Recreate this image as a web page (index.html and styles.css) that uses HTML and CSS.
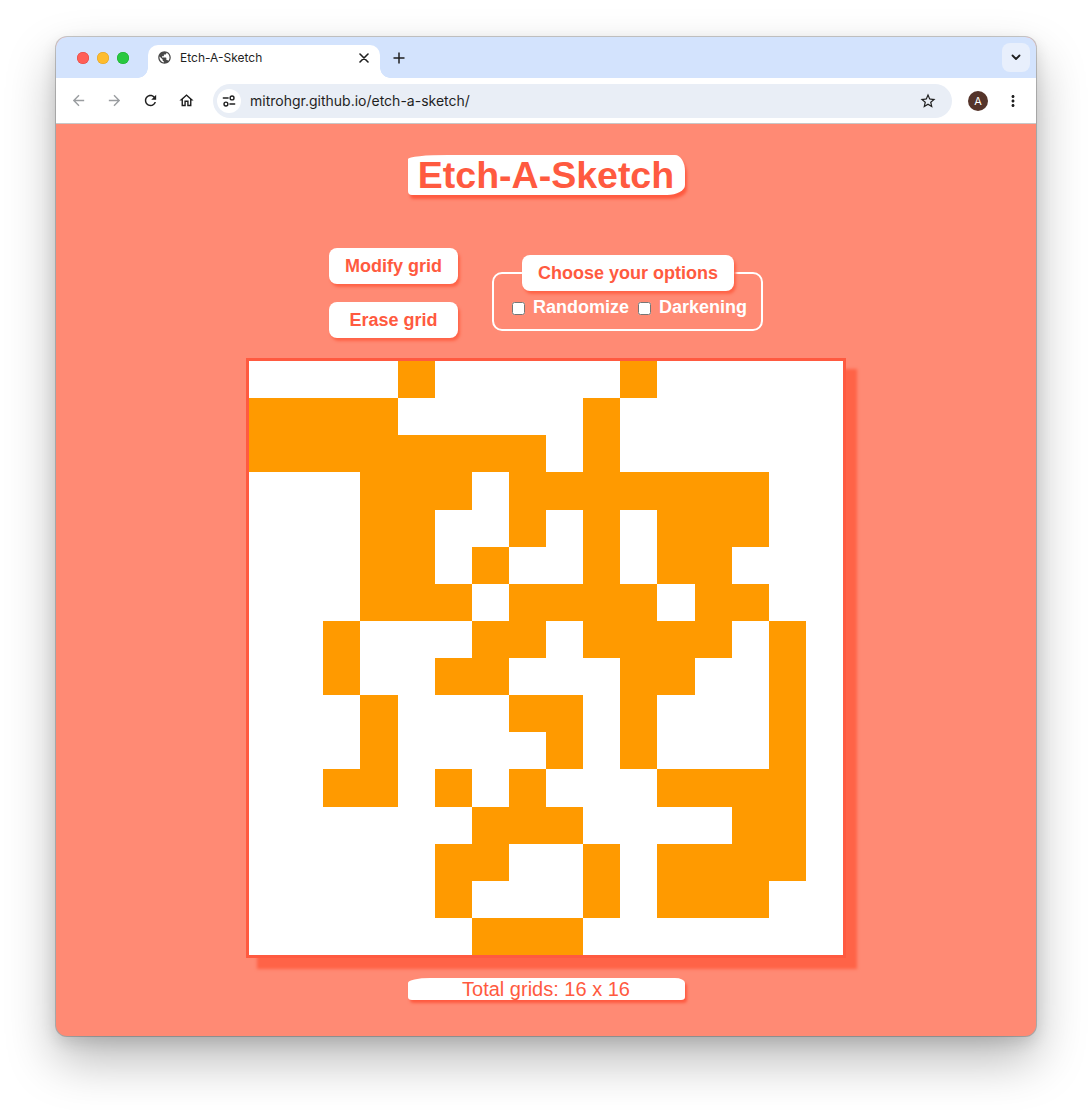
FILE: index.html
```html
<!DOCTYPE html>
<html lang="en">
<head>
<meta charset="utf-8">
<title>Etch-A-Sketch</title>
<link rel="stylesheet" href="styles.css">
</head>
<body>
<div class="window">
  <div class="tabstrip">
    <div class="lights"><span class="light red"></span><span class="light yellow"></span><span class="light green"></span></div>
    <div class="tab">
      <svg class="globe" width="15" height="15" viewBox="0 0 24 24"><path fill="#474747" d="M12 2C6.48 2 2 6.48 2 12s4.48 10 10 10 10-4.48 10-10S17.52 2 12 2zm-1 17.93c-3.95-.49-7-3.85-7-7.93 0-.62.08-1.21.21-1.79L9 15v1c0 1.1.9 2 2 2v1.93zm6.9-2.54c-.26-.81-1-1.39-1.9-1.39h-1v-3c0-.55-.45-1-1-1H8v-2h2c.55 0 1-.45 1-1V7h2c1.1 0 2-.9 2-2v-.41c2.93 1.19 5 4.06 5 7.41 0 2.08-.8 3.97-2.1 5.39z"/></svg>
      <span class="tab-title">Etch-A-Sketch</span>
      <svg class="close" width="10" height="10" viewBox="0 0 10 10"><path d="M1 1L9 9M9 1L1 9" stroke="#1f1f1f" stroke-width="1.6" stroke-linecap="round"/></svg>
    </div>
    <svg class="newtab" width="12" height="12" viewBox="0 0 12 12"><path d="M6 0.5V11.5M0.5 6H11.5" stroke="#1f1f1f" stroke-width="1.5"/></svg>
    <div class="spacer"></div>
    <div class="tabsearch">
      <svg width="10" height="7" viewBox="0 0 10 7"><path d="M1.5 1.5L5 5L8.5 1.5" fill="none" stroke="#1f1f1f" stroke-width="1.8" stroke-linecap="round" stroke-linejoin="round"/></svg>
    </div>
  </div>
  <div class="toolbar">
    <div class="navbtn"><svg width="17" height="17" viewBox="0 0 24 24"><path fill="#9a9da0" d="M20 11H7.83l5.59-5.59L12 4l-8 8 8 8 1.41-1.41L7.83 13H20v-2z"/></svg></div>
    <div class="navbtn"><svg width="17" height="17" viewBox="0 0 24 24"><path fill="#9a9da0" d="M12 4l-1.41 1.41L16.17 11H4v2h12.17l-5.58 5.59L12 20l8-8z"/></svg></div>
    <div class="navbtn"><svg width="17" height="17" viewBox="0 0 24 24"><path fill="#1f1f1f" d="M17.65 6.35C16.2 4.9 14.21 4 12 4c-4.42 0-7.99 3.58-7.99 8s3.57 8 7.99 8c3.73 0 6.84-2.55 7.73-6h-2.08c-.82 2.33-3.04 4-5.65 4-3.31 0-6-2.69-6-6s2.69-6 6-6c1.66 0 3.14.69 4.22 1.78L13 11h7V4l-2.35 2.35z"/></svg></div>
    <div class="navbtn"><svg width="17" height="17" viewBox="0 0 24 24"><path fill="#1f1f1f" d="M12 5.69l5 4.5V18h-2v-6H9v6H7v-7.81l5-4.5M12 3L2 12h3v8h6v-6h2v6h6v-8h3L12 3z"/></svg></div>
    <div class="omnibox">
      <div class="siteinfo">
        <svg width="14" height="14" viewBox="0 0 16 16"><g fill="none" stroke="#1f1f1f" stroke-width="1.6" stroke-linecap="round"><line x1="1.5" y1="4.5" x2="7" y2="4.5"/><circle cx="11.5" cy="4.5" r="2.2"/><circle cx="4.5" cy="11.5" r="2.2"/><line x1="9" y1="11.5" x2="14.5" y2="11.5"/></g></svg>
      </div>
      <span class="url">mitrohgr.github.io/etch-a-sketch/</span>
      <div class="spacer"></div>
      <svg width="18" height="18" viewBox="0 0 24 24"><path fill="#1f1f1f" d="M22 9.24l-7.19-.62L12 2 9.19 8.63 2 9.24l5.46 4.73L5.82 21 12 17.27 18.18 21l-1.63-7.03L22 9.24zM12 15.4l-3.76 2.27 1-4.28-3.32-2.88 4.38-.38L12 6.1l1.71 4.04 4.38.38-3.32 2.88 1 4.28L12 15.4z"/></svg>
    </div>
    <div class="avatar">A</div>
    <svg class="kebab" width="18" height="18" viewBox="0 0 24 24"><path fill="#1f1f1f" d="M12 8c1.1 0 2-.9 2-2s-.9-2-2-2-2 .9-2 2 .9 2 2 2zm0 2c-1.1 0-2 .9-2 2s.9 2 2 2 2-.9 2-2-.9-2-2-2zm0 6c-1.1 0-2 .9-2 2s.9 2 2 2 2-.9 2-2-.9-2-2-2z"/></svg>
  </div>

  <main class="page">
    <h1 class="title">Etch-A-Sketch</h1>

    <div class="controls">
      <div class="buttons">
        <button class="btn">Modify grid</button>
        <button class="btn">Erase grid</button>
      </div>
      <fieldset class="options">
        <legend>Choose your options</legend>
        <input type="checkbox" id="randomize"> <label for="randomize">Randomize</label>
        <input type="checkbox" id="darkening"> <label for="darkening">Darkening</label>
      </fieldset>
    </div>

    <div class="board">
      <div class="c"></div><div class="c"></div><div class="c"></div><div class="c"></div><div class="c on"></div><div class="c"></div><div class="c"></div><div class="c"></div><div class="c"></div><div class="c"></div><div class="c on"></div><div class="c"></div><div class="c"></div><div class="c"></div><div class="c"></div><div class="c"></div>
      <div class="c on"></div><div class="c on"></div><div class="c on"></div><div class="c on"></div><div class="c"></div><div class="c"></div><div class="c"></div><div class="c"></div><div class="c"></div><div class="c on"></div><div class="c"></div><div class="c"></div><div class="c"></div><div class="c"></div><div class="c"></div><div class="c"></div>
      <div class="c on"></div><div class="c on"></div><div class="c on"></div><div class="c on"></div><div class="c on"></div><div class="c on"></div><div class="c on"></div><div class="c on"></div><div class="c"></div><div class="c on"></div><div class="c"></div><div class="c"></div><div class="c"></div><div class="c"></div><div class="c"></div><div class="c"></div>
      <div class="c"></div><div class="c"></div><div class="c"></div><div class="c on"></div><div class="c on"></div><div class="c on"></div><div class="c"></div><div class="c on"></div><div class="c on"></div><div class="c on"></div><div class="c on"></div><div class="c on"></div><div class="c on"></div><div class="c on"></div><div class="c"></div><div class="c"></div>
      <div class="c"></div><div class="c"></div><div class="c"></div><div class="c on"></div><div class="c on"></div><div class="c"></div><div class="c"></div><div class="c on"></div><div class="c"></div><div class="c on"></div><div class="c"></div><div class="c on"></div><div class="c on"></div><div class="c on"></div><div class="c"></div><div class="c"></div>
      <div class="c"></div><div class="c"></div><div class="c"></div><div class="c on"></div><div class="c on"></div><div class="c"></div><div class="c on"></div><div class="c"></div><div class="c"></div><div class="c on"></div><div class="c"></div><div class="c on"></div><div class="c on"></div><div class="c"></div><div class="c"></div><div class="c"></div>
      <div class="c"></div><div class="c"></div><div class="c"></div><div class="c on"></div><div class="c on"></div><div class="c on"></div><div class="c"></div><div class="c on"></div><div class="c on"></div><div class="c on"></div><div class="c on"></div><div class="c"></div><div class="c on"></div><div class="c on"></div><div class="c"></div><div class="c"></div>
      <div class="c"></div><div class="c"></div><div class="c on"></div><div class="c"></div><div class="c"></div><div class="c"></div><div class="c on"></div><div class="c on"></div><div class="c"></div><div class="c on"></div><div class="c on"></div><div class="c on"></div><div class="c on"></div><div class="c"></div><div class="c on"></div><div class="c"></div>
      <div class="c"></div><div class="c"></div><div class="c on"></div><div class="c"></div><div class="c"></div><div class="c on"></div><div class="c on"></div><div class="c"></div><div class="c"></div><div class="c"></div><div class="c on"></div><div class="c on"></div><div class="c"></div><div class="c"></div><div class="c on"></div><div class="c"></div>
      <div class="c"></div><div class="c"></div><div class="c"></div><div class="c on"></div><div class="c"></div><div class="c"></div><div class="c"></div><div class="c on"></div><div class="c on"></div><div class="c"></div><div class="c on"></div><div class="c"></div><div class="c"></div><div class="c"></div><div class="c on"></div><div class="c"></div>
      <div class="c"></div><div class="c"></div><div class="c"></div><div class="c on"></div><div class="c"></div><div class="c"></div><div class="c"></div><div class="c"></div><div class="c on"></div><div class="c"></div><div class="c on"></div><div class="c"></div><div class="c"></div><div class="c"></div><div class="c on"></div><div class="c"></div>
      <div class="c"></div><div class="c"></div><div class="c on"></div><div class="c on"></div><div class="c"></div><div class="c on"></div><div class="c"></div><div class="c on"></div><div class="c"></div><div class="c"></div><div class="c"></div><div class="c on"></div><div class="c on"></div><div class="c on"></div><div class="c on"></div><div class="c"></div>
      <div class="c"></div><div class="c"></div><div class="c"></div><div class="c"></div><div class="c"></div><div class="c"></div><div class="c on"></div><div class="c on"></div><div class="c on"></div><div class="c"></div><div class="c"></div><div class="c"></div><div class="c"></div><div class="c on"></div><div class="c on"></div><div class="c"></div>
      <div class="c"></div><div class="c"></div><div class="c"></div><div class="c"></div><div class="c"></div><div class="c on"></div><div class="c on"></div><div class="c"></div><div class="c"></div><div class="c on"></div><div class="c"></div><div class="c on"></div><div class="c on"></div><div class="c on"></div><div class="c on"></div><div class="c"></div>
      <div class="c"></div><div class="c"></div><div class="c"></div><div class="c"></div><div class="c"></div><div class="c on"></div><div class="c"></div><div class="c"></div><div class="c"></div><div class="c on"></div><div class="c"></div><div class="c on"></div><div class="c on"></div><div class="c on"></div><div class="c"></div><div class="c"></div>
      <div class="c"></div><div class="c"></div><div class="c"></div><div class="c"></div><div class="c"></div><div class="c"></div><div class="c on"></div><div class="c on"></div><div class="c on"></div><div class="c"></div><div class="c"></div><div class="c"></div><div class="c"></div><div class="c"></div><div class="c"></div><div class="c"></div>
    </div>

    <p class="total">Total grids: 16 x 16</p>
  </main>
</div>
</body>
</html>
```
FILE: styles.css
```css
* { box-sizing: border-box; }

html, body {
  margin: 0;
  padding: 0;
}

body {
  width: 1092px;
  height: 1110px;
  overflow: hidden;
  background: #ffffff;
  font-family: "Liberation Sans", Arial, sans-serif;
}

.window {
  margin: 37px 0 0 56px;
  width: 980px;
  height: 999px;
  border-radius: 11px;
  overflow: hidden;
  display: flex;
  flex-direction: column;
  background: #ff8a74;
  box-shadow: 0 0 0 1px rgba(0, 0, 0, 0.2), 0 24px 50px rgba(0, 0, 0, 0.28), 0 6px 16px rgba(0, 0, 0, 0.12);
}

/* ---------- tab strip ---------- */
.tabstrip {
  flex: none;
  height: 41px;
  background: #d3e3fd;
  display: flex;
  align-items: center;
  padding: 0 6px 0 21px;
  font-family: Inter, "Noto Sans", sans-serif;
}

.lights {
  display: flex;
  gap: 8px;
  margin-right: 19px;
}

.light {
  width: 12px;
  height: 12px;
  border-radius: 50%;
}
.red { background: #ff5f57; box-shadow: inset 0 0 0 0.5px #e0443e; }
.yellow { background: #febc2e; box-shadow: inset 0 0 0 0.5px #dea123; }
.green { background: #28c840; box-shadow: inset 0 0 0 0.5px #1aab29; }

.tab {
  align-self: flex-end;
  position: relative;
  width: 232px;
  height: 33px;
  background: #ffffff;
  border-radius: 10px 10px 0 0;
  display: flex;
  align-items: center;
  padding: 0 11px 8px 9px;
}
.tab::before,
.tab::after {
  content: "";
  position: absolute;
  bottom: 0;
  width: 10px;
  height: 10px;
}
.tab::before {
  left: -10px;
  background: radial-gradient(circle at 0 0, transparent 9.5px, #ffffff 10px);
}
.tab::after {
  right: -10px;
  background: radial-gradient(circle at 100% 0, transparent 9.5px, #ffffff 10px);
}

.tab-title {
  flex: 1;
  margin-left: 8px;
  font-size: 12px;
  color: #1f1f1f;
}

.newtab {
  margin-left: 13px;
}

.spacer { flex: 1; }

.tabsearch {
  width: 28px;
  height: 29px;
  border-radius: 8px;
  background: #e8effc;
  display: flex;
  align-items: center;
  justify-content: center;
}

/* ---------- toolbar ---------- */
.toolbar {
  flex: none;
  height: 46px;
  background: #ffffff;
  border-bottom: 1px solid #c7c7c7;
  display: flex;
  align-items: center;
  padding-left: 6px;
  font-family: Inter, "Noto Sans", sans-serif;
}

.navbtn {
  width: 32px;
  height: 32px;
  display: flex;
  align-items: center;
  justify-content: center;
}
.navbtn + .navbtn { margin-left: 4px; }

.omnibox {
  margin-left: 11px;
  width: 739px;
  height: 34px;
  border-radius: 17px;
  background: #e9eef6;
  display: flex;
  align-items: center;
  padding: 0 15px 0 4px;
}

.siteinfo {
  width: 24px;
  height: 24px;
  border-radius: 50%;
  background: #ffffff;
  display: flex;
  align-items: center;
  justify-content: center;
}

.url {
  margin-left: 9px;
  font-size: 14px;
  color: #1f1f1f;
}

.avatar {
  margin-left: 16px;
  width: 20px;
  height: 20px;
  border-radius: 50%;
  background: #55342a;
  color: #ffffff;
  font-size: 11px;
  line-height: 20px;
  text-align: center;
}

.kebab {
  margin-left: 16px;
}

/* ---------- page ---------- */
.page {
  flex: 1;
  display: flex;
  flex-direction: column;
  align-items: center;
  padding-top: 31px;
  font-family: "Liberation Sans", Arial, sans-serif;
}

.title {
  margin: 0;
  width: 277px;
  height: 40px;
  line-height: 41px;
  text-align: center;
  background: #ffffff;
  color: #ff5a40;
  font-size: 37.5px;
  font-weight: bold;
  border-radius: 40px 10px 18px 4px / 4px 16px 10px 4px;
  box-shadow: 2px 4px 3px #ff5a40;
}

.controls {
  margin-top: 53px;
  display: flex;
  align-items: center;
  gap: 34px;
}

.buttons {
  display: flex;
  flex-direction: column;
  gap: 18px;
}

.btn {
  height: 36px;
  padding: 0 16px;
  border: none;
  border-radius: 8px;
  background: #ffffff;
  color: #ff5a40;
  font-family: "Liberation Sans", Arial, sans-serif;
  font-size: 18px;
  font-weight: bold;
  box-shadow: 2px 3px 3px #ff6347;
}

.options {
  margin: 0;
  border: 2px solid #ffffff;
  border-radius: 10px;
  padding: 6px 14px 11px 14px;
  color: #ffffff;
  font-size: 18px;
  font-weight: bold;
  white-space: nowrap;
}

.options legend {
  margin-left: 14px;
  padding: 0 16px;
  height: 36px;
  line-height: 36px;
  background: #ffffff;
  border-radius: 8px;
  color: #ff5a40;
  box-shadow: 2px 3px 3px #ff6347;
}

.options input {
  vertical-align: -2px;
}

.board {
  margin-top: 20px;
  width: 600px;
  height: 600px;
  border: 3px solid #ff5a40;
  background: #ffffff;
  display: grid;
  grid-template-columns: repeat(16, 1fr);
  grid-template-rows: repeat(16, 1fr);
  box-shadow: 11px 11px 3px #ff6347;
}

.c.on { background: #ff9a00; }

.total {
  margin: 20px 0 0;
  width: 277px;
  height: 22px;
  line-height: 22px;
  text-align: center;
  background: #ffffff;
  color: #ff5a40;
  font-size: 20px;
  border-radius: 22px 10px 4px 4px / 5px 5px 3px 3px;
  box-shadow: 2px 3px 3px #ff5a40;
}
```
